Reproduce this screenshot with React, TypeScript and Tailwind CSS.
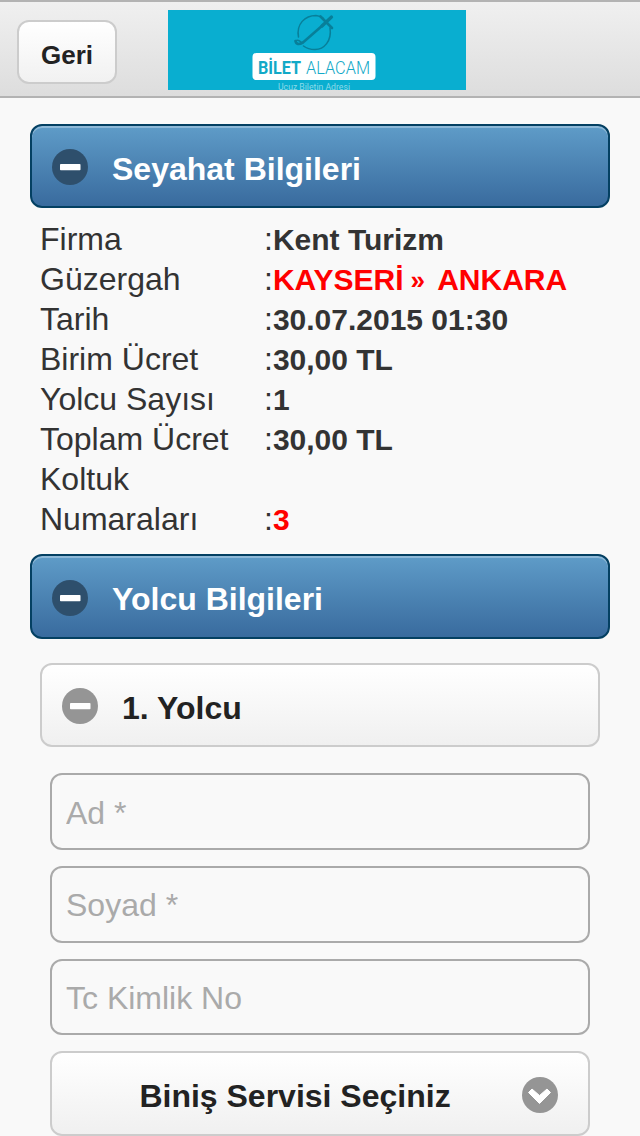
import React from 'react';

const tripDetails = [
  { label: 'Firma', value: 'Kent Turizm' },
  {
    label: 'Güzergah',
    value: (
      <>
        KAYSERİ<span className="relative -top-px mr-[5px] -ml-px pl-2 text-[26px] leading-none">»</span> ANKARA
      </>
    ),
    highlight: true,
  },
  { label: 'Tarih', value: '30.07.2015 01:30' },
  { label: 'Birim Ücret', value: '30,00 TL' },
  { label: 'Yolcu Sayısı', value: '1' },
  { label: 'Toplam Ücret', value: '30,00 TL' },
  { label: 'Koltuk Numaraları', value: '3', highlight: true },
];

const passengerFields = [
  { name: 'ad', placeholder: 'Ad *', height: 'h-[77px] pt-1' },
  { name: 'soyad', placeholder: 'Soyad *', height: 'h-[77px] pt-0.5' },
  { name: 'tc', placeholder: 'Tc Kimlik No', height: 'h-[76px] pt-0.5' },
];

function MinusIcon({ className }: { className: string }) {
  return (
    <svg className={`w-9 h-9 shrink-0 ${className}`} viewBox="0 0 36 36">
      <circle cx="18" cy="18" r="18" fill="currentColor" />
      <rect x="8" y="15" width="20.5" height="6.3" rx="0.8" fill="#fff" />
    </svg>
  );
}

function Logo() {
  return (
    <svg className="w-[298px] h-20 bg-[#09aed0]" viewBox="0 0 298 80">
      {/* Plane circling a globe */}
      <g fill="none" stroke="#087f99" strokeLinecap="round">
        <path d="M130.500 27C128 14 137 5.500 148 5.500Q152 6 155 8M162 18C164 31 156 39.500 147 39.500Q140 39.500 135.500 36" strokeWidth="1.5" />
        <path d="M127.500 31Q128.500 36 135 32.500L155 15" strokeWidth="2.6" />
        <path d="M127.500 31Q130 29 133 32" strokeWidth="1.5" />
        <path d="M154 16L163.500 7" strokeWidth="3.2" />
        <path d="M152.500 6.500L164 18" strokeWidth="2.6" />
      </g>
      <rect x="84.500" y="43" width="123" height="27" rx="4" fill="#fff" />
      <g fontFamily="Roboto, sans-serif" fill="#12a9c7">
        <text x="90" y="64" fontSize="19" fontWeight="700" textLength="43" lengthAdjust="spacingAndGlyphs">BİLET</text>
        <text x="138" y="64" fontSize="19" fontWeight="300" textLength="64" lengthAdjust="spacingAndGlyphs">ALACAM</text>
      </g>
      <text x="110" y="79.500" fontSize="9.5" fill="#8bdae9" fontFamily="Roboto, sans-serif" textLength="72" lengthAdjust="spacingAndGlyphs">
        Ucuz Biletin Adresi
      </text>
    </svg>
  );
}

function SectionHeader({ title, className }: { title: string; className: string }) {
  return (
    <button
      className={`flex w-full items-center rounded-xl border-2 border-[#044062] bg-linear-to-b from-[#5f9cc8] to-[#396b9e] px-5 pt-0.5 text-left shadow-[inset_0_2px_0_rgba(255,255,255,0.3)] ${className}`}
    >
      <MinusIcon className="text-[#2e4f6c]" />
      <span className="ml-6 pt-[3px] text-[32px] leading-10 font-bold text-white">{title}</span>
    </button>
  );
}

export default function App() {
  return (
    <div className="h-[1136px] w-[640px] overflow-hidden bg-[#f9f9f9] font-['Liberation_Sans',Arial,sans-serif] text-[#333]">
      {/* Header */}
      <header className="flex h-[98px] items-start border-y-2 border-[#b3b3b3] bg-linear-to-b from-[#f0f0f0] to-[#dddddd] pl-[17px]">
        <button className="mt-[18px] h-16 w-[100px] rounded-xl border-2 border-[#ccc] bg-linear-to-b from-white to-[#f1f1f1] pt-1.5 text-[26px] font-bold text-[#222]">
          Geri
        </button>
        <div className="mt-2 ml-[51px]">
          <Logo />
        </div>
      </header>

      <main className="px-[30px] pt-[26px]">
        {/* Trip info */}
        <SectionHeader title="Seyahat Bilgileri" className="h-[84px]" />
        <dl className="px-2.5 pt-[11px] text-[32px] leading-10">
          {tripDetails.map((item) => (
            <div key={item.label} className="flex items-end">
              <dt className="w-[224px] pr-5">{item.label}</dt>
              <dd className="whitespace-pre">
                :
                <b className={`text-[30px] leading-none ${item.highlight ? 'text-[#ff0000]' : ''}`}>{item.value}</b>
              </dd>
            </div>
          ))}
        </dl>

        {/* Passenger info */}
        <SectionHeader title="Yolcu Bilgileri" className="mt-[15px] h-[85px]" />
        <div className="px-2.5 pt-6">
          <button className="flex h-[84px] w-full items-center rounded-xl border-2 border-[#ccc] bg-linear-to-b from-white to-[#f0f0f0] px-5 pt-0.5 text-left">
            <MinusIcon className="text-[#959595]" />
            <span className="ml-6 pt-1 text-[32px] leading-10 font-bold text-[#222]">1. Yolcu</span>
          </button>

          <form className="flex flex-col gap-4 px-2.5 pt-[26px]">
            {passengerFields.map((field) => (
              <input
                key={field.name}
                name={field.name}
                placeholder={field.placeholder}
                className={`w-full rounded-xl border-2 border-[#aaa] bg-transparent px-3.5 text-[32px] placeholder:text-[#aaa] ${field.height}`}
              />
            ))}
            <button
              type="button"
              className="flex h-[85px] w-full items-center rounded-xl border-2 border-[#ccc] bg-linear-to-b from-white to-[#f0f0f0] pt-0.5 pr-[30px] pl-9"
            >
              <span className="flex-1 pt-[3px] text-center text-[32px] leading-10 font-bold text-[#222]">Biniş Servisi Seçiniz</span>
              <svg className="ml-5 h-9 w-9 text-[#959595]" viewBox="0 0 36 36">
                <circle cx="18" cy="18" r="18" fill="currentColor" />
                <path d="M6.500 15.500L10 12L17.500 18.500L25 12L28.500 15.500L17.500 26.500Z" fill="#fff" stroke="#fff" strokeWidth="1" strokeLinejoin="round" />
              </svg>
            </button>
          </form>
        </div>
      </main>
    </div>
  );
}
